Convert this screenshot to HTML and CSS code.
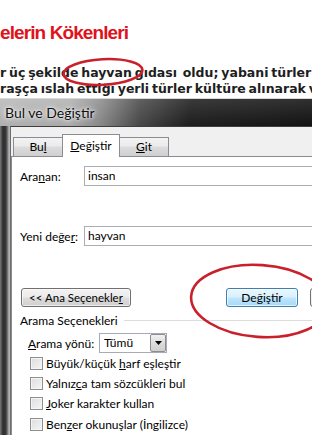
FILE: index.html
```html
<!DOCTYPE html>
<html lang="tr">
<head>
<meta charset="utf-8">
<title>Bul ve Değiştir</title>
<link rel="stylesheet" href="styles.css">
</head>
<body>
<div class="page">
  <h1 class="heading">elerin Kökenleri</h1>
  <div class="article">
    <p class="line">r üç şekilde hayvan gıdası&nbsp; oldu; yabani türler doğrudan</p>
    <p class="line">raşça ıslah ettiği yerli türler kültüre alınarak ve</p>
    <p class="line">r olduğu bilinmektedir ve ayrıca ürünler elde etmiştir</p>
  </div>

  <div class="window">
    <div class="titlebar"><span class="title">Bul ve Değiştir</span></div>
    <div class="frame">
      <div class="client">
        <div class="tabs">
          <div class="tab">Bu<u>l</u></div>
          <div class="tab active"><u>D</u>eğiştir</div>
          <div class="tab"><u>G</u>it</div>
        </div>
        <div class="panel">
          <div class="field">
            <span class="label">Ara<u>n</u>an:</span>
            <div class="input">insan</div>
          </div>
          <div class="field field-second">
            <span class="label">Yeni değe<u>r</u>:</span>
            <div class="input">hayvan</div>
          </div>
          <div class="buttons">
            <div class="btn btn-less">&lt;&lt; Ana Seçenekle<u>r</u></div>
            <div class="btn btn-default">Değiştir</div>
            <div class="btn btn-next">Tümünü</div>
          </div>
          <div class="group">
            <span class="group-title">Arama Seçenekleri</span>
            <span class="group-line"></span>
          </div>
          <div class="direction">
            <span class="label-dir"><u>A</u>rama yönü:</span>
            <div class="select"><span class="select-value">Tümü</span><span class="select-btn"><svg width="7" height="4" viewBox="0 0 7 4"><path d="M0 0h7L3.5 4z" fill="#000"/></svg></span></div>
          </div>
          <div class="checks">
            <div class="check"><span class="box"></span><span>Büyük/küçük <u>h</u>arf eşleştir</span></div>
            <div class="check"><span class="box"></span><span>Yalnız<u>c</u>a tam sözcükleri bul</span></div>
            <div class="check"><span class="box"></span><span><u>J</u>oker karakter kullan</span></div>
            <div class="check"><span class="box"></span><span>Ben<u>z</u>er okunuşlar (İngilizce)</span></div>
            <div class="check"><span class="box"></span><span>Tüm sözcük biçimlerini bul</span></div>
          </div>
        </div>
      </div>
    </div>
  </div>

  <svg class="mark mark-word" width="88" height="34" viewBox="0 0 88 34"><ellipse cx="44" cy="17" rx="39.5" ry="12.8" transform="rotate(-3 44 17)" fill="none" stroke="#c9202b" stroke-width="2.6"/></svg>
  <svg class="mark mark-button" width="140" height="84" viewBox="0 0 140 84"><ellipse cx="72" cy="41" rx="69" ry="36" transform="rotate(4 72 41)" fill="none" stroke="#c9202b" stroke-width="2.6"/></svg>
</div>
</body>
</html>
```

FILE: styles.css
```css
* { box-sizing: border-box; }
html, body { margin: 0; padding: 0; }
body {
  width: 312px;
  height: 435px;
  overflow: hidden;
  background: #fff;
}
.page {
  position: relative;
  width: 312px;
  height: 435px;
  overflow: hidden;
}
.heading {
  margin: 22px 0 0 0;
  font-family: "Liberation Sans", Arial, sans-serif;
  font-weight: bold;
  font-size: 19px;
  letter-spacing: -0.9px;
  line-height: 22px;
  color: #e0121c;
}
.article {
  margin-top: 21px;
}
.line {
  margin: 0;
  white-space: nowrap;
  font-family: "DejaVu Sans", Verdana, sans-serif;
  font-weight: bold;
  font-size: 12.5px;
  word-spacing: -1.5px;
  line-height: 16px;
  color: #1e1e1e;
}
u { text-decoration: underline; text-underline-offset: 1px; }

.window {
  position: absolute;
  left: 0;
  top: 98px;
  width: 330px;
  height: 340px;
  display: flex;
  flex-direction: column;
  font-family: Lato, "Open Sans", sans-serif;
  font-size: 12px;
  color: #000;
}
.titlebar {
  height: 28px;
  flex: none;
  border-top: 1px solid #d8d8d8;
  background:
    linear-gradient(to bottom, rgba(255,255,255,0.12), rgba(0,0,0,0.05)),
    linear-gradient(to right, #b9b9b9 0, #b2b2b2 70px, #8e8e8e 100px, #4a4a4a 140px, #1f1f1f 190px, #121212 100%);
  display: flex;
  align-items: center;
  padding-left: 5px;
}
.title {
  font-size: 14px;
  color: #111;
  text-shadow: 0 0 6px #fff, 0 0 3px #fff;
}
.frame {
  flex: 1;
  padding-left: 10px;
  background: linear-gradient(to right, #7b7b7b 0, #2c2c2c 3px, #3a3a3a 6px, #8a8a8a 8px, #b4b4b4 9px, #b4b4b4 10px);
}
.client {
  height: 100%;
  background: #f0f0f0;
  border-top: 1px solid #3e3e3e;
  border-left: 1px solid #6d6d6d;
  padding-top: 6px;
}
.tabs {
  display: flex;
  align-items: flex-end;
  padding-left: 2px;
  height: 23px;
  position: relative;
  z-index: 1;
}
.tab {
  flex: none;
  height: 19px;
  width: 50px;
  text-align: center;
  line-height: 18px;
  border: 1px solid #8a8c93;
  border-bottom: none;
  background: linear-gradient(to bottom, #f3f3f3 0, #ebebeb 45%, #dcdcdc 50%, #cfcfcf 100%);
  margin-right: -1px;
  white-space: nowrap;
}
.tab.active {
  width: 58px;
  height: 23px;
  line-height: 22px;
  background: #fff;
  margin-bottom: -1px;
  position: relative;
  z-index: 2;
}
.panel {
  border-top: 1px solid #8a8c93;
  border-left: 1px solid #8a8c93;
  background: #fff;
  height: 300px;
  padding: 9px 0 0 8px;
}
.field {
  display: grid;
  grid-template-columns: 64px 1fr;
  align-items: center;
  height: 20px;
}
.field-second { margin-top: 40px; }
.label { white-space: nowrap; }
.input {
  height: 20px;
  border: 1px solid #abadb3;
  border-right: none;
  padding-left: 3px;
  line-height: 18px;
}
.buttons {
  margin-top: 42px;
  display: flex;
  align-items: center;
  height: 19px;
}
.btn {
  flex: none;
  height: 19px;
  border: 1px solid #707070;
  border-radius: 3px;
  background: linear-gradient(to bottom, #f2f2f2 0, #ebebeb 48%, #dddddd 52%, #cfcfcf 100%);
  text-align: center;
  line-height: 17px;
  white-space: nowrap;
  box-shadow: inset 0 0 0 1px rgba(255,255,255,0.6);
}
.btn-less { width: 110px; margin-left: 1px; font-size: 11.5px; }
.btn-default {
  width: 72px;
  margin-left: 95px;
  border-color: #3c7fb1;
  background: linear-gradient(to bottom, #eaf6fd 0, #d9f0fc 48%, #bee6fd 52%, #a7d9f5 100%);
  box-shadow: inset 0 0 0 1px rgba(255,255,255,0.7);
}
.btn-next { width: 72px; margin-left: 12px; }
.group {
  margin-top: 5px;
  display: flex;
  align-items: center;
  gap: 6px;
  height: 16px;
}
.group-line {
  flex: 1;
  height: 1px;
  background: #dcdcdc;
}
.direction {
  margin-top: 5px;
  margin-left: 8px;
  display: flex;
  align-items: center;
  height: 20px;
}
.label-dir { width: 71px; white-space: nowrap; }
.select {
  width: 68px;
  height: 20px;
  border: 1px solid #a5acb5;
  display: flex;
  align-items: stretch;
}
.select-value {
  flex: 1;
  padding-left: 4px;
  line-height: 18px;
}
.select-btn {
  width: 16px;
  border: 1px solid #8d8d8d;
  border-radius: 2px;
  background: linear-gradient(to bottom, #f2f2f2, #dcdcdc 50%, #cfcfcf);
  display: flex;
  align-items: center;
  justify-content: center;
}
.checks {
  margin-left: 10px;
  display: flex;
  flex-direction: column;
}
.check {
  display: flex;
  align-items: center;
  gap: 2px;
  height: 20.3px;
  white-space: nowrap;
}
.box {
  width: 13px;
  height: 13px;
  border: 1px solid #8f8f8f;
  background: linear-gradient(135deg, #dcdcdc, #f6f6f6);
  box-shadow: inset 0 0 0 1px #f4f4f4;
  margin-right: 1px;
}
.mark {
  position: absolute;
}
.mark-word { left: 59px; top: 55px; }
.mark-button { left: 188px; top: 260px; }
```
